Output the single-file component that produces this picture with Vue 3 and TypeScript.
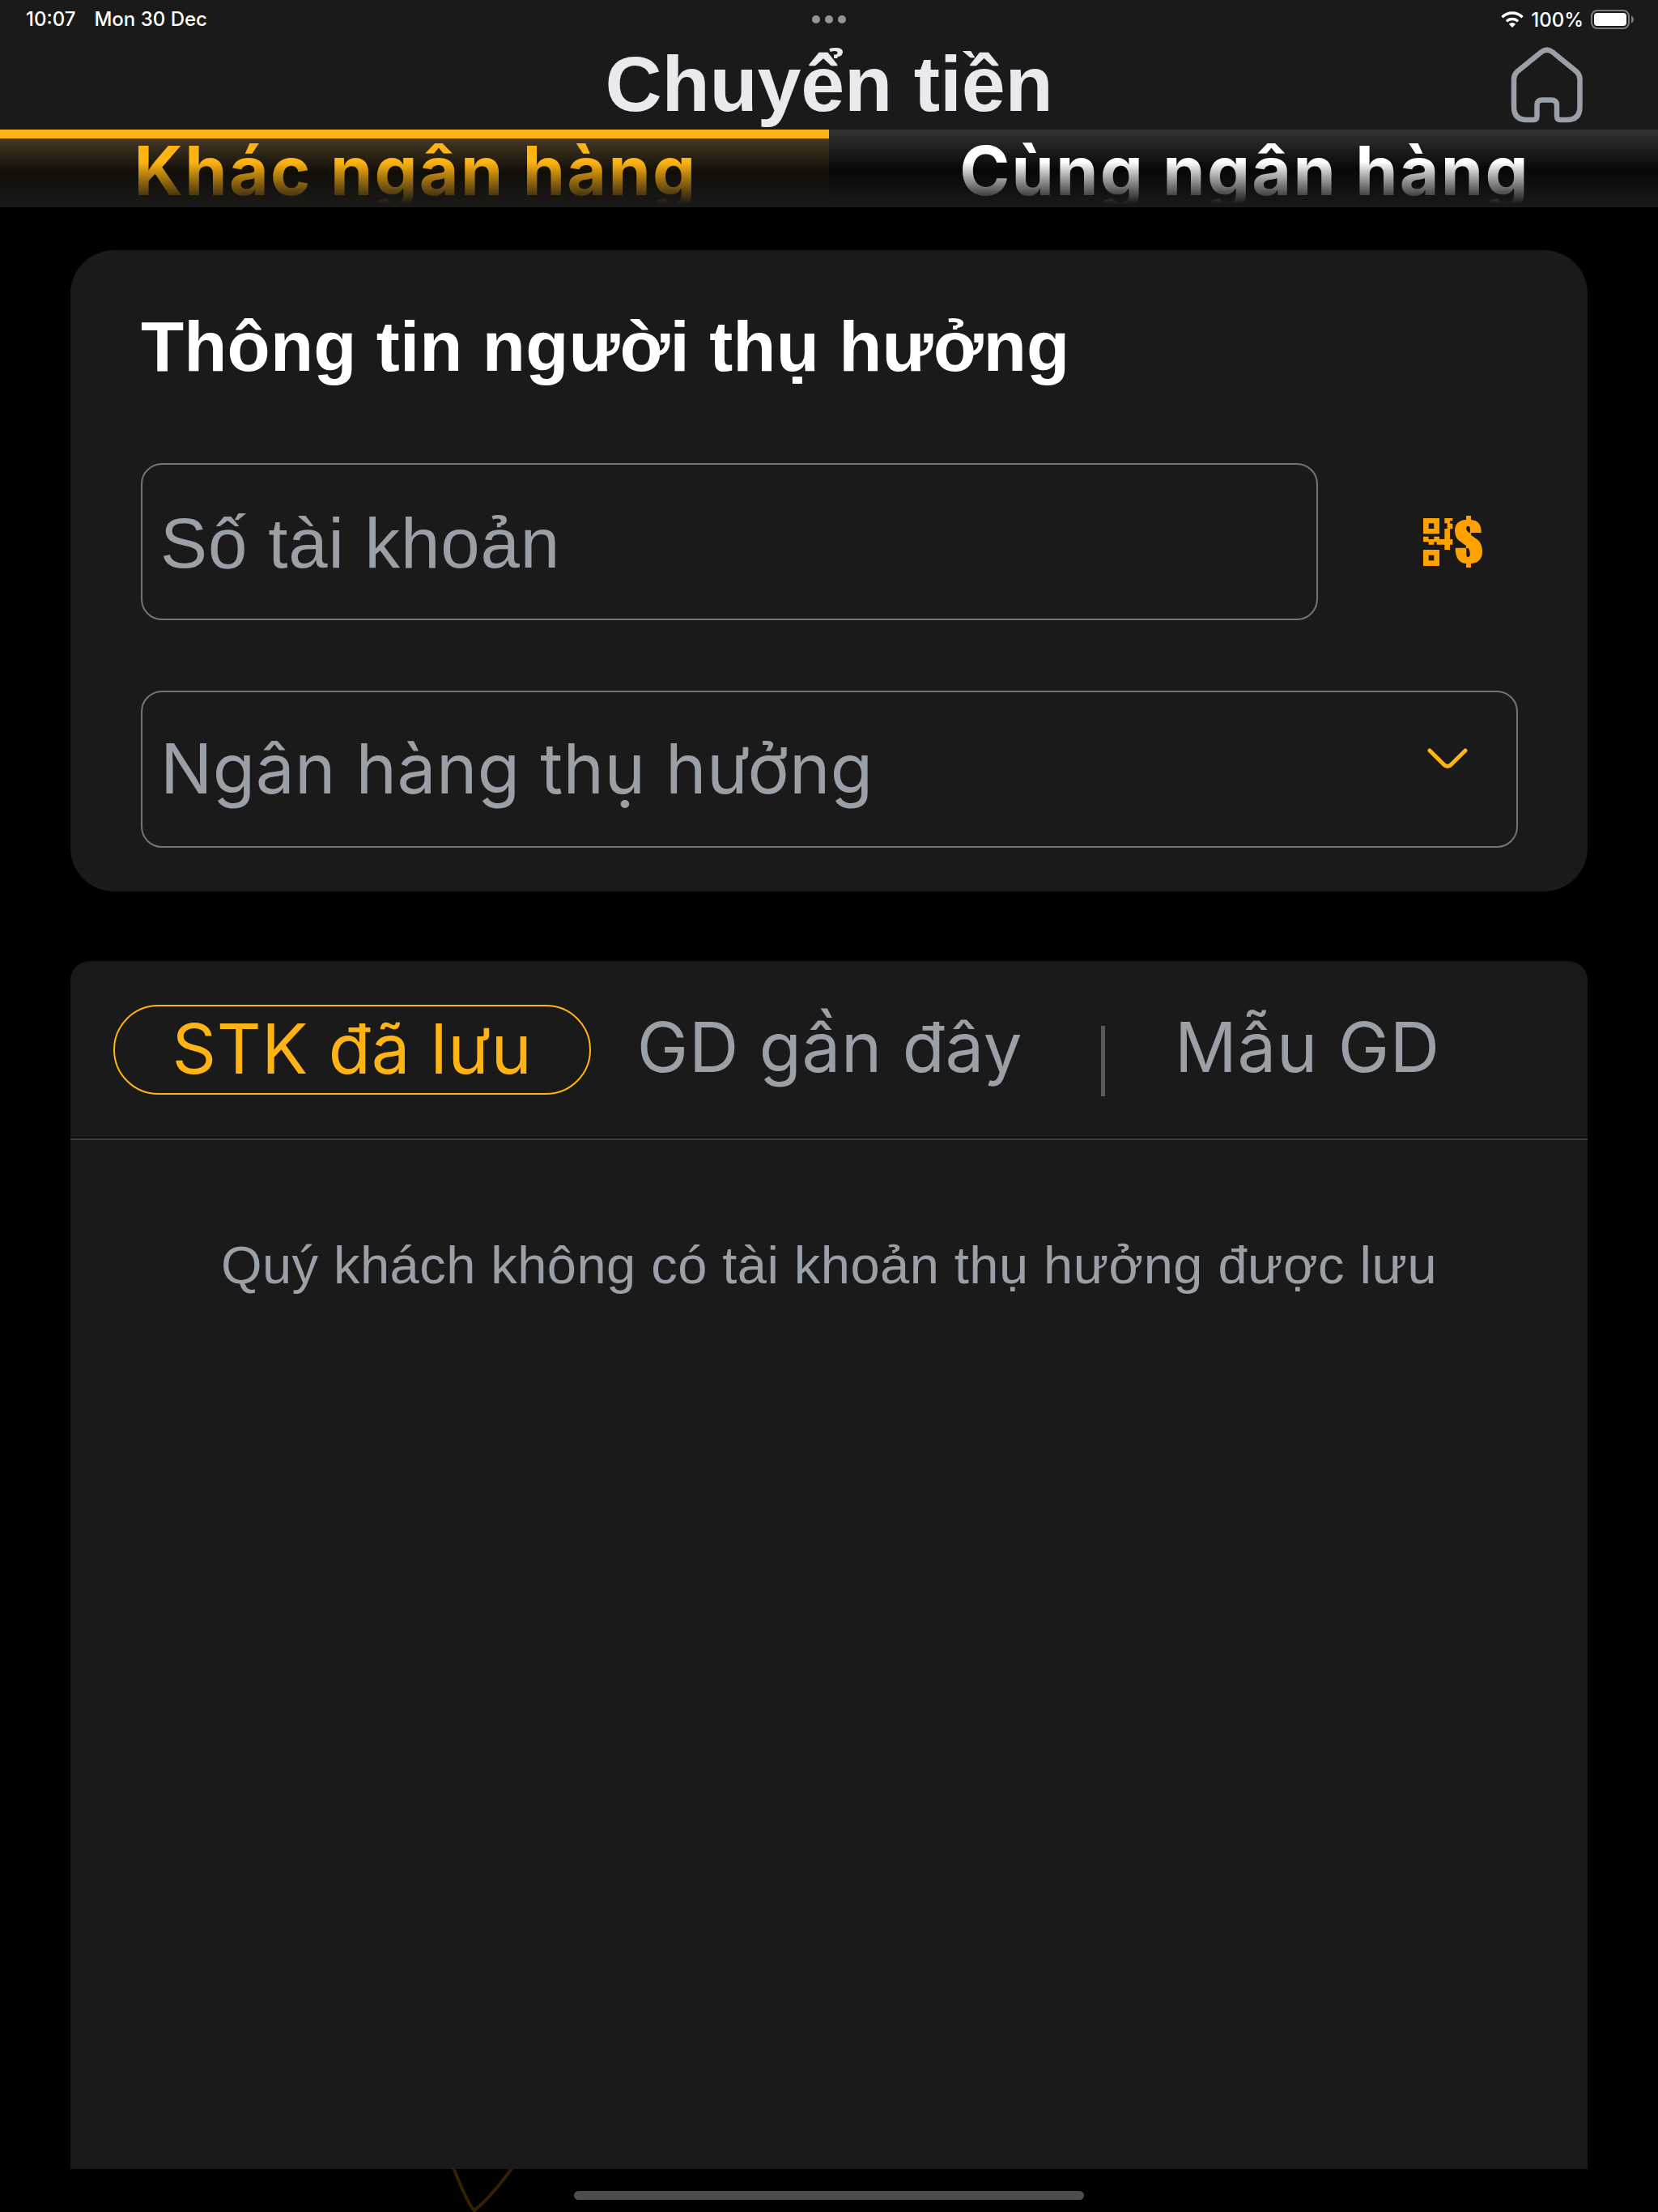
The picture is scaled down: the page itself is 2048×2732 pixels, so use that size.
<script setup lang="ts">
import { ref } from 'vue'

interface Tab { id: string; label: string }

const bankTabs: Tab[] = [
  { id: 'other', label: 'Khác ngân hàng' },
  { id: 'same', label: 'Cùng ngân hàng' },
]
const activeBank = ref('other')
const activeList = ref('saved')
</script>

<template>
  <div class="screen">
    <header class="header">
      <div class="status">
        <div class="status-left"><span class="time">10:07</span><span class="date">Mon 30 Dec</span></div>
        <div class="dots"><i></i><i></i><i></i></div>
        <div class="status-right">
          <svg class="wifi" width="28" height="20" viewBox="0 0 28 20">
            <path d="M14 20 L9.8 15.7 A6 6 0 0 1 18.2 15.7 Z" fill="#fff" />
            <path d="M6.9 12.4 A10.2 10.2 0 0 1 21.1 12.4" fill="none" stroke="#fff" stroke-width="3.4" />
            <path d="M1.5 7.2 A17.8 17.8 0 0 1 26.5 7.2" fill="none" stroke="#fff" stroke-width="3.6" />
          </svg>
          <span class="percent">100%</span>
          <svg class="battery" width="54" height="24" viewBox="0 0 54 24">
            <rect x="1" y="1" width="46" height="22" rx="7" fill="none" stroke="#7c7c7c" stroke-width="2" />
            <rect x="4" y="4" width="40" height="16" rx="4" fill="#fff" />
            <path d="M50 7.5 Q53 9 53 12 Q53 15 50 16.5 Z" fill="#7c7c7c" />
          </svg>
        </div>
      </div>
      <div class="title-row">
        <h1 class="title">Chuyển tiền</h1>
        <svg class="home" width="90" height="94" viewBox="0 0 90 94">
          <path
            d="M37.500 6.500 Q44.700 0.800 52 6.500 L81.500 30.500 Q85.500 34.500 85.500 40 V74 Q85.500 90 69.500 90 H61 Q57 90 57 85 V72 Q57 65.500 50 65.500 H39 Q32.500 65.500 32.500 72 V85 Q32.500 90 28.500 90 H20 Q4 90 4 74 V40 Q4 34.500 8 30.500 Z"
            fill="none" stroke="#9aa0a6" stroke-width="6.500" stroke-linejoin="round" />
        </svg>
      </div>
    </header>

    <nav class="bank-tabs">
      <button v-for="t in bankTabs" :key="t.id" class="bank-tab" :class="[t.id, { active: activeBank === t.id }]" @click="activeBank = t.id">
        <span class="bank-label">{{ t.label }}</span>
      </button>
    </nav>

    <main class="content">
      <section class="card">
        <h2 class="heading">Thông tin người thụ hưởng</h2>
        <div class="account-row">
          <div class="field account"><span>Số tài khoản</span></div>
          <svg class="qr" width="74" height="65" viewBox="0 0 222 195" fill="#ffa200">
            <path fill-rule="evenodd" d="M0 9h60v58H0z M20 28v20h20v-20z M0 126h60v60H0z M20 146v20h20v-20z" />
            <path d="M0 77h20v10h20v-10h20v10h19v-39h10v-20h-10v-19h30v10h-10v10h10v20h-10v38h10v20h-10v19h-20v-19h-29v-10h-10v10h-20v-10H0z" />
            <path d="M159 0h18v192h-18z M168 14C200 14 216 28 215 63H174V48Q174 38 166.500 38Q159 38 159 48Q158 60 170 67L200 88Q219 102 219 132Q219 178 168 178Q118 178 119 119H159V142Q159 153 166.500 153Q174 153 174 142Q174 126 164 115L134 93Q117 80 117 55Q117 14 168 14Z" class="dollar" />
            <path d="M159.500 48q0-10 7-10t7 10v16h-2q-12-7-12-16z M159.500 120h8q6 10 6 22q0 11-7 11t-7-11z" fill="#1a1a1a" />
          </svg>
        </div>
        <div class="field bank">
          <span class="bank-placeholder">Ngân hàng thụ hưởng</span>
          <svg class="chevron" width="50" height="26" viewBox="0 0 50 26">
            <path d="M3 3 L20.500 20.300 Q25 24.500 29.500 20.300 L47 3" fill="none" stroke="#ffb414" stroke-width="5" stroke-linecap="round" />
          </svg>
        </div>
      </section>

      <section class="panel">
        <div class="list-tabs">
          <button class="pill" :class="{ selected: activeList === 'saved' }" @click="activeList = 'saved'">STK đã lưu</button>
          <button class="list-tab recent" @click="activeList = 'recent'">GD gần đây</button>
          <i class="separator"></i>
          <button class="list-tab template" @click="activeList = 'template'">Mẫu GD</button>
        </div>
        <p class="empty">Quý khách không có tài khoản thụ hưởng được lưu</p>
      </section>
    </main>

    <footer class="footer">
      <svg class="motif" width="84" height="53" viewBox="0 0 84 53">
        <path d="M3 -2 Q21 44 29 51 Q51 33 76 -2" fill="none" stroke="#332200" stroke-width="4" />
      </svg>
      <div class="indicator"></div>
    </footer>
  </div>
</template>

<style>
html, body { background: #000; }
</style>

<style scoped>
.screen {
  width: 2048px;
  height: 2732px;
  overflow: hidden;
  display: flex;
  flex-direction: column;
  background: #000;
  font-family: "Liberation Sans", Arial, sans-serif;
  white-space: nowrap;
}
button { border: 0; background: none; padding: 0; margin: 0; font: inherit; color: inherit; letter-spacing: inherit; }
h1, h2, p { margin: 0; }

.header { height: 160px; background: #1a1a1a; }
.status {
  height: 48px;
  display: grid;
  grid-template-columns: 1fr auto 1fr;
  grid-template-rows: 48px;
  align-items: center;
  font-family: Inter, sans-serif;
  font-size: 24px;
  font-weight: 500;
  line-height: 47px;
  color: #fff;
}
.status-left { display: flex; gap: 23px; padding-left: 32px; height: 48px; }
.dots { display: flex; gap: 6px; }
.dots i { width: 10px; height: 10px; border-radius: 50%; background: #949494; }
.status-right { display: flex; justify-content: flex-end; align-items: center; padding-right: 29px; }
.percent { margin: 0 9px; }
.title-row { height: 112px; display: grid; grid-template-columns: 1fr auto 1fr; }
.title {
  grid-column: 2;
  font-size: 97px;
  line-height: 112px;
  letter-spacing: -0.2px;
  font-weight: 700;
  color: #e8eaed;
}
.home { justify-self: end; margin: 10px 92px 0 0; }

.bank-tabs { height: 96px; display: flex; }
.bank-tab {
  flex: 1;
  display: flex;
  justify-content: center;
  align-items: flex-start;
  box-sizing: border-box;
  font-family: Inter, sans-serif;
  font-size: 84px;
  font-weight: 700;
  letter-spacing: 2.3px;
  color: #fff;
  background: linear-gradient(#333 0, #070707 50px, #1a1a1a 96px);
}
.bank-tab.active {
  border-top: 11px solid #ffb414;
  color: #ffb414;
  background: linear-gradient(#463923 0, #110e07 42px, #1a1a1a 85px);
}
.bank-label {
  height: 101px;
  line-height: 101px;
  padding-left: 3px;
  -webkit-mask-image: linear-gradient(#000 40px, transparent 92px);
  mask-image: linear-gradient(#000 40px, transparent 92px);
}
.active .bank-label { margin-top: -11px; }

.content { flex: none; padding: 53px 87px 0; }
.card {
  height: 792px;
  box-sizing: border-box;
  padding: 69px 86px 0 87px;
  border-radius: 54px;
  background: #1a1a1a;
}
.heading { font-size: 87px; line-height: 100px; letter-spacing: 0.15px; font-weight: 700; color: #fff; }
.account-row { display: flex; align-items: center; margin-top: 94px; }
.field {
  height: 194px;
  box-sizing: border-box;
  border: 2px solid #757575;
  border-radius: 26px;
  display: flex;
  align-items: center;
  color: #9aa0a6;
}
.account { width: 1454px; padding: 3px 0 0 22px; font-size: 87px; letter-spacing: 0.85px; }
.qr { margin-left: 130px; }
.bank {
  margin-top: 87px;
  padding: 0 60px 0 22px;
  justify-content: space-between;
  font-family: Inter, sans-serif;
  font-size: 85.5px;
  letter-spacing: 0.42px;
}
.bank-placeholder { padding-bottom: 2px; }
.chevron { margin-bottom: 27px; }

.panel {
  margin-top: 86px;
  height: 1492px;
  border-radius: 24px 24px 0 0;
  background: #1a1a1a;
}
.list-tabs {
  height: 221px;
  box-sizing: border-box;
  border-bottom: 2px solid #3a3d41;
  box-shadow: inset 0 -1px #000;
  display: flex;
  align-items: flex-start;
  padding: 54px 0 0 53px;
  font-family: Inter, sans-serif;
  font-size: 85px;
  line-height: 105px;
  letter-spacing: 0.75px;
  color: #9aa0a6;
}
.pill {
  width: 590px;
  height: 111px;
  box-sizing: border-box;
  border: 2px solid transparent;
  border-radius: 56px;
  padding-bottom: 6px;
}
.pill.selected { border-color: #ffb414; color: #ffb414; }
.recent { margin-left: 56px; width: 478px; }
.separator { width: 5px; height: 87px; margin: 26px 0 0 96px; background: #5a5a5a; }
.template { margin-left: 86px; }
.empty {
  margin-top: 102px;
  text-align: center;
  font-size: 65px;
  line-height: 105px;
  letter-spacing: 0.46px;
  color: #9aa0a6;
}

.footer { height: 53px; display: grid; grid-template-columns: 557px 1fr; }
.motif { grid-area: 1 / 2; }
.indicator {
  grid-area: 1 / 1 / 2 / 3;
  justify-self: center;
  margin-top: 27px;
  width: 630px;
  height: 11px;
  border-radius: 6px;
  background: #4d4d4d;
}
</style>
